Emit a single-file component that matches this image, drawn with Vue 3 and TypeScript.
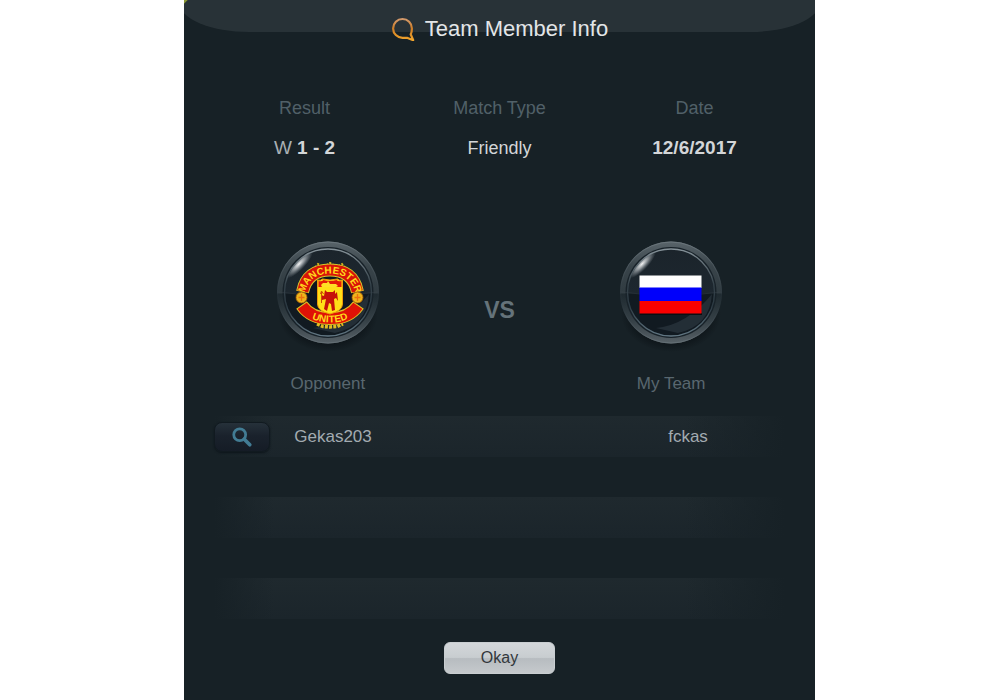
<script setup lang="ts">
interface Fact {
  label: string
  value: string
  prefix?: string
  strong: boolean
}

interface Pairing {
  opponent: string
  mine: string
}

const facts: Fact[] = [
  { label: 'Result', prefix: 'W', value: '1 - 2', strong: true },
  { label: 'Match Type', value: 'Friendly', strong: false },
  { label: 'Date', value: '12/6/2017', strong: true },
]

const pairings: Pairing[] = [
  { opponent: 'Gekas203', mine: 'fckas' },
  { opponent: '', mine: '' },
  { opponent: '', mine: '' },
]

const teams = [
  { id: 'opponent', label: 'Opponent' },
  { id: 'mine', label: 'My Team' },
]
</script>

<template>
  <main class="panel">
    <header class="header">
      <svg class="bubble" viewBox="0 0 24 24" aria-hidden="true">
        <defs>
          <linearGradient id="bubble-stroke" x1="0" y1="0" x2="0" y2="1">
            <stop offset="0" stop-color="#d39a6c" />
            <stop offset="0.45" stop-color="#cf7d25" />
            <stop offset="1" stop-color="#f2a52c" />
          </linearGradient>
        </defs>
        <path
          d="M16 20.800H11.500A9.400 9.400 0 1 1 20.900 11.400Q20.900 15 19.700 17.300L22.200 23.200Z"
          fill="none" stroke="url(#bubble-stroke)" stroke-width="2.200" stroke-linejoin="round"
        />
      </svg>
      <h1 class="title">Team Member Info</h1>
    </header>

    <dl class="facts">
      <div v-for="fact in facts" :key="fact.label" class="fact">
        <dt>{{ fact.label }}</dt>
        <dd :class="{ strong: fact.strong }">
          <span v-if="fact.prefix" class="prefix">{{ fact.prefix }}&nbsp;</span>{{ fact.value }}
        </dd>
      </div>
    </dl>

    <section class="teams">
      <figure v-for="team in teams" :key="team.id" class="team" :class="team.id">
        <svg class="orb" viewBox="0 0 120 120" aria-hidden="true">
          <defs>
            <linearGradient :id="`${team.id}-rim`" x1="0" y1="0" x2="0" y2="1">
              <stop offset="0" stop-color="#59646a" />
              <stop offset="0.25" stop-color="#39444a" />
              <stop offset="0.5" stop-color="#303b41" />
              <stop offset="0.52" stop-color="#1f2a30" />
              <stop offset="0.78" stop-color="#364147" />
              <stop offset="1" stop-color="#586268" />
            </linearGradient>
            <linearGradient :id="`${team.id}-glass`" x1="0" y1="0" x2="0" y2="1">
              <stop offset="0" stop-color="#1b242b" />
              <stop offset="0.5" stop-color="#1d272f" />
              <stop offset="0.52" stop-color="#111a21" />
              <stop offset="1" stop-color="#111a21" />
            </linearGradient>
            <linearGradient :id="`${team.id}-line`" x1="0" y1="0" x2="0" y2="1">
              <stop offset="0" stop-color="#87939a" />
              <stop offset="0.4" stop-color="#36434b" />
              <stop offset="0.65" stop-color="#2c3a43" />
              <stop offset="1" stop-color="#627783" />
            </linearGradient>
            <linearGradient :id="`${team.id}-edge`" x1="0" y1="0" x2="0" y2="1">
              <stop offset="0" stop-color="#6b767c" />
              <stop offset="0.45" stop-color="#38434a" stop-opacity="0.500" />
              <stop offset="0.6" stop-color="#26313a" stop-opacity="0.200" />
              <stop offset="1" stop-color="#646f75" />
            </linearGradient>
            <radialGradient :id="`${team.id}-shine`">
              <stop offset="0" stop-color="#fff" stop-opacity="0.95" />
              <stop offset="0.4" stop-color="#dce1e4" stop-opacity="0.6" />
              <stop offset="1" stop-color="#a5afb5" stop-opacity="0" />
            </radialGradient>
            <radialGradient :id="`${team.id}-shadow`">
              <stop offset="0.6" stop-color="#070c10" stop-opacity="0.9" />
              <stop offset="1" stop-color="#070c10" stop-opacity="0" />
            </radialGradient>
            <clipPath :id="`${team.id}-clip`"><circle cx="60" cy="60" r="43" /></clipPath>
          </defs>
          <ellipse cx="60" cy="82" rx="50" ry="38" :fill="`url(#${team.id}-shadow)`" />
          <circle cx="60" cy="60.500" r="51" :fill="`url(#${team.id}-rim)`" />
          <circle cx="60" cy="60.500" r="50.500" fill="none" :stroke="`url(#${team.id}-edge)`" />
          <circle cx="60" cy="60.500" r="45.500" fill="#182229" />
          <circle cx="60" cy="60.500" r="43" :fill="`url(#${team.id}-glass)`" />
          <g :clip-path="`url(#${team.id}-clip)`">
            <path d="M45 96Q76 93 101 62 99 94 67 101z" fill="#36424b" opacity="0.500" />
            <ellipse cx="31" cy="32" rx="19" ry="6" transform="rotate(-46 31 32)" :fill="`url(#${team.id}-shine)`" />
          </g>
          <circle cx="60" cy="60.500" r="43.500" fill="none" :stroke="`url(#${team.id}-line)`" stroke-width="1.300" />
          <path d="M10 60q50 7 100 0" fill="none" stroke="#3c474e" stroke-width="1" opacity="0.400" />

          <g v-if="team.id === 'opponent'">
            <circle cx="62" cy="64" r="27" fill="#0d1520" />
            <path d="M45 38l5-6 5 3 7-4 7 4 5-3 5 6" fill="#232410" stroke="#d6b51f" stroke-width="2" stroke-dasharray="2 1.500" />
            <path d="M31 52l6-9M93 52l-6-9" fill="none" stroke="#c9ae24" stroke-width="2" stroke-dasharray="2 1.500" />
            <path d="M49 92l6 2.500 7 .5 7-.5 6-2.500" fill="none" stroke="#e0bd22" stroke-width="3.500" stroke-dasharray="3 1.200" />
            <path d="M34.500 60Q39 38 62 38t27.500 22" fill="none" stroke="#d6c32a" stroke-width="13" />
            <path d="M34.700 59.300Q39 38 62 38t27.300 21.300" fill="none" stroke="#d91408" stroke-width="11" />
            <path d="M33.500 73Q43 86.500 62 86.500t28.500-13.500" fill="none" stroke="#e1bd22" stroke-width="13" />
            <path d="M34.200 73.800Q43 86.500 62 86.500t27.800-12.700" fill="none" stroke="#df1206" stroke-width="11" />
            <path id="crest-top" d="M36 63Q41 41.500 62 41.500t26 21.500" fill="none" />
            <path id="crest-bottom" d="M37 82.500Q47 90.500 62 90.500t25-8" fill="none" />
            <text class="crest-text" font-size="10"><textPath href="#crest-top" startOffset="50%" text-anchor="middle">MANCHESTER</textPath></text>
            <text class="crest-text" font-size="10"><textPath href="#crest-bottom" startOffset="50%" text-anchor="middle">UNITED</textPath></text>
            <g fill="#edb51c" stroke="#a65b08" stroke-width="0.800">
              <circle cx="33.500" cy="65.500" r="5.500" /><circle cx="89.500" cy="65.500" r="5.500" />
            </g>
            <path d="M33.500 62v7M30.500 65.500h6M89.500 62v7M86.500 65.500h6" stroke="#e9710f" stroke-width="1.300" />
            <path d="M49.500 48q3 1 5-1 7.500 2 15 0 2 2 5 1v24q0 7-12.500 10-12.500-3-12.500-10z" fill="#ffdf17" stroke="#ed9b09" />
            <path d="M50.500 49q3 1 5-1 6.500 2 13 0 2 2 5 1v6h-23z" fill="#e41b08" />
            <path d="M53 53l2-2h4l1-2 2 3h6l2 2-2 1H54z" fill="#ffe025" />
            <path d="M57 58l2 2h6l2-2v4l2-2 1 9-2-3-2 1 1 11-3 1-1-7-2-1-2 8-3-2 2-10-4 1-1-5 3 1z" fill="#c61209" />
            <path d="M53.500 60v11M52.500 62l1-3 2 3" fill="none" stroke="#ce4b08" stroke-width="1" />
          </g>
          <g v-else>
            <path d="M29 81h62v2H29z" fill="#090e12" />
            <path d="M28.500 43.500h62V56h-62z" fill="#fff" />
            <path d="M28.500 55.500h62V69h-62z" fill="#0000fb" />
            <path d="M28.500 69h62v12.500h-62z" fill="#fa0000" />
          </g>
        </svg>
        <figcaption>{{ team.label }}</figcaption>
      </figure>
      <span class="versus">VS</span>
    </section>

    <ul class="pairings">
      <li v-for="(pairing, index) in pairings" :key="index" class="pairing">
        <template v-if="pairing.opponent">
          <button type="button" class="search" :aria-label="`View ${pairing.opponent}`">
            <svg viewBox="0 0 24 24" aria-hidden="true">
              <circle cx="9.500" cy="9.500" r="6.500" fill="none" stroke="#427c94" stroke-width="3" />
              <path d="M14.500 14.500l6 6" stroke="#427c94" stroke-width="4" stroke-linecap="round" />
            </svg>
          </button>
          <span>{{ pairing.opponent }}</span>
          <span class="mine">{{ pairing.mine }}</span>
        </template>
      </li>
    </ul>

    <button type="button" class="okay">Okay</button>
  </main>
</template>

<style>
body {
  margin: 0;
  background: #fff;
}
</style>

<style scoped>
.panel {
  box-sizing: border-box;
  display: flex;
  flex-direction: column;
  width: 63.1%;
  min-height: 100vh;
  margin-left: 18.4%;
  padding-bottom: 26px;
  overflow: hidden;
  background: #172126;
  color: #a3abb1;
  font-family: "Liberation Sans", Arial, sans-serif;
}

.header {
  position: relative;
  display: flex;
  align-items: center;
  justify-content: center;
  gap: 10px;
  height: 58px;
  background: linear-gradient(135deg, #8f9b35 2px, transparent 4px);
}

.header::before {
  content: "";
  position: absolute;
  top: 0;
  left: -5px;
  right: -5px;
  height: 32px;
  border-radius: 0 0 70px 70px / 0 0 30px 30px;
  background: #283237;
  clip-path: polygon(9px 0, 100% 0, 100% 100%, 0 100%, 0 9px);
}

.bubble {
  position: relative;
  width: 24px;
  height: 24px;
}

.title {
  position: relative;
  margin: 0;
  color: #e3e6e8;
  font-size: 22px;
  font-weight: 400;
  line-height: 26px;
}

.facts {
  display: grid;
  grid-template-columns: repeat(3, 1fr);
  margin: 38px 23px 0;
  text-align: center;
}

.fact {
  display: grid;
  gap: 16px;
  font-size: 18px;
  line-height: 24px;
}

.fact dt {
  color: #516068;
}

.fact dd {
  margin: 0;
  color: #d3d6d8;
}

.fact .strong {
  font-size: 19px;
  font-weight: 700;
}

.prefix {
  color: #a9afb3;
  font-weight: 400;
}

.teams {
  display: grid;
  grid-template-columns: repeat(3, 1fr);
  margin: 72px 58px 0;
}

.team {
  display: grid;
  grid-row: 1;
  gap: 20px;
  justify-items: center;
  margin: 0;
  color: #59676f;
  font-size: 17px;
  line-height: 24px;
}

.opponent {
  grid-column: 1;
}

.mine {
  grid-column: 3;
}

.orb {
  display: block;
  width: 120px;
  height: 120px;
}

.crest-text {
  fill: #ffd91c;
  font-weight: 700;
}

.versus {
  grid-column: 2;
  grid-row: 1;
  align-self: center;
  padding-bottom: 8px;
  color: #65737a;
  font-size: 23px;
  font-weight: 700;
  text-align: center;
}

.pairings {
  display: grid;
  gap: 40px;
  margin: 20px 30px 0;
  padding: 0;
  list-style: none;
}

.pairing {
  display: grid;
  grid-template-columns: 56px 126px 1fr 194px;
  align-items: center;
  height: 41px;
  background:
    linear-gradient(90deg, #172126, transparent 60px, transparent calc(100% - 100px), #172126),
    linear-gradient(#1f292e, #1b252b);
  font-size: 17px;
  text-align: center;
}

.pairing .mine {
  grid-column: 4;
}

.search {
  display: flex;
  align-items: center;
  justify-content: center;
  height: 30px;
  padding: 0;
  border: 1px solid #111a20;
  border-radius: 8px;
  background: linear-gradient(#26313a, #1a222c 45%, #151c26);
  box-shadow: 0 1px 2px #0d151b;
}

.search svg {
  width: 22px;
  height: 22px;
}

.okay {
  align-self: center;
  width: 111px;
  height: 32px;
  margin-top: 23px;
  padding: 0;
  border: 1px solid #c9ced1;
  border-radius: 6px;
  background: linear-gradient(#d3d7da, #c8cdd0 48%, #b7bcc0 52%, #c5c9cc);
  color: #32383c;
  font-family: inherit;
  font-size: 16px;
}
</style>
